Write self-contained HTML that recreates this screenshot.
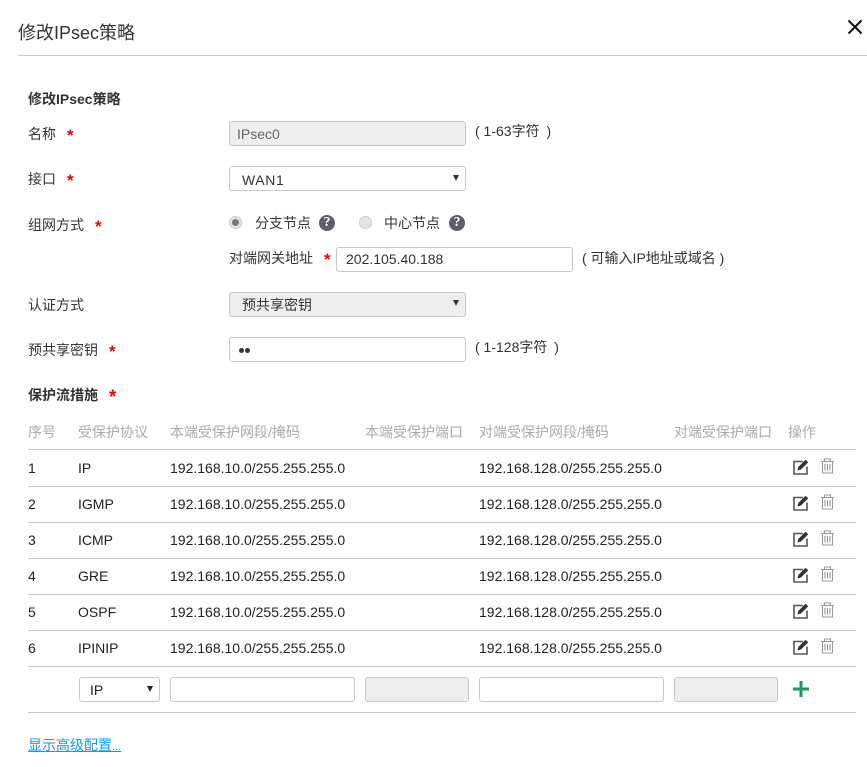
<!DOCTYPE html>
<html lang="zh">
<head>
<meta charset="utf-8">
<title>修改IPsec策略</title>
<style>
html,body{margin:0;padding:0;background:#fff}
body{width:867px;height:767px;position:relative;overflow:hidden;font-family:"Liberation Sans","WenQuanYi Zen Hei","Noto Sans CJK SC",sans-serif;font-size:14px;color:#333}
.t{position:absolute;white-space:nowrap;line-height:18px}
.l{position:absolute;height:1px;background:#c8c8c8}
.b{position:absolute;box-sizing:border-box;border:1px solid #c8c8c8;border-radius:3px;background:#fff;height:25px}
.g{background:#eee}
.s{color:#e00;font-weight:bold;font-size:17px}
.h{color:#aaa}
.n{font-size:14px;color:#222}
.a{position:absolute;width:0;height:0;border-left:3px solid transparent;border-right:3px solid transparent;border-top:6px solid #333}
.r{position:absolute;width:13px;height:13px;border-radius:50%;background:#e4e4e4;border:1px solid #ccc;box-sizing:border-box}
.q{position:absolute;width:16px;height:16px;border-radius:50%;background:#5f5f63;color:#fff;font:bold 14px/16px "Liberation Serif",serif;text-align:center}
svg{position:absolute}
</style>
</head>
<body>
<div class="t" style="left:18px;top:21px;font-size:18px;line-height:24px;color:#333">修改IPsec策略</div>
<svg style="left:847px;top:19px" width="16" height="16" viewBox="0 0 16 16"><path d="M1.500 1.500L14.500 14.500M14.500 1.500L1.500 14.500" stroke="#111" stroke-width="2" fill="none"/></svg>
<div class="l" style="left:18px;top:55px;width:849px"></div>

<div class="t" style="left:28px;top:90px;font-weight:bold">修改IPsec策略</div>

<div class="t" style="left:28px;top:125px">名称</div><div class="t s" style="left:67px;top:127px">*</div>
<div class="b g" style="left:229px;top:121px;width:237px"></div>
<div class="t" style="left:237px;top:125px;color:#666">IPsec0</div>
<div class="t" style="left:475px;top:122px">( 1-63字符 <span style="margin-left:3px">)</span></div>

<div class="t" style="left:28px;top:170px">接口</div><div class="t s" style="left:67px;top:172px">*</div>
<div class="b" style="left:229px;top:166px;width:237px"></div>
<div class="t" style="left:242px;top:171px;letter-spacing:.6px">WAN1</div>
<div class="a" style="left:453px;top:175px"></div>

<div class="t" style="left:28px;top:216px">组网方式</div><div class="t s" style="left:95px;top:218px">*</div>
<div class="r" style="left:229px;top:216px"></div><div style="position:absolute;left:232px;top:219px;width:7px;height:7px;border-radius:50%;background:#777"></div>
<div class="t" style="left:255px;top:214px">分支节点</div><div class="q" style="left:319px;top:215px">?</div>
<div class="r" style="left:359px;top:216px"></div>
<div class="t" style="left:384px;top:214px">中心节点</div><div class="q" style="left:449px;top:215px">?</div>

<div class="t" style="left:229px;top:249px">对端网关地址</div><div class="t s" style="left:324px;top:251px">*</div>
<div class="b" style="left:336px;top:247px;width:237px"></div>
<div class="t" style="left:346px;top:250px">202.105.40.188</div>
<div class="t" style="left:582px;top:249px">( 可输入IP地址或域名 )</div>

<div class="t" style="left:28px;top:296px">认证方式</div>
<div class="b g" style="left:229px;top:292px;width:237px"></div>
<div class="t" style="left:242px;top:296px">预共享密钥</div>
<div class="a" style="left:453px;top:300px"></div>

<div class="t" style="left:28px;top:341px">预共享密钥</div><div class="t s" style="left:109px;top:343px">*</div>
<div class="b" style="left:229px;top:337px;width:237px"></div>
<div style="position:absolute;left:239px;top:348px;width:5px;height:5px;border-radius:50%;background:#333"></div>
<div style="position:absolute;left:245px;top:348px;width:5px;height:5px;border-radius:50%;background:#333"></div>
<div class="t" style="left:475px;top:338px">( 1-128字符 <span style="margin-left:3px">)</span></div>

<div class="t" style="left:28px;top:386px;font-weight:bold">保护流措施</div><div class="t s" style="left:109px;top:389px;font-size:19px">*</div>

<div class="t h" style="left:28px;top:423px">序号</div>
<div class="t h" style="left:78px;top:423px">受保护协议</div>
<div class="t h" style="left:170px;top:423px">本端受保护网段/掩码</div>
<div class="t h" style="left:365px;top:423px">本端受保护端口</div>
<div class="t h" style="left:479px;top:423px">对端受保护网段/掩码</div>
<div class="t h" style="left:674px;top:423px">对端受保护端口</div>
<div class="t h" style="left:788px;top:423px">操作</div>

<div class="l" style="left:28px;top:449px;width:828px"></div>
<div class="l" style="left:28px;top:486px;width:828px"></div>
<div class="l" style="left:28px;top:522px;width:828px"></div>
<div class="l" style="left:28px;top:558px;width:828px"></div>
<div class="l" style="left:28px;top:594px;width:828px"></div>
<div class="l" style="left:28px;top:630px;width:828px"></div>
<div class="l" style="left:28px;top:666px;width:828px"></div>
<div class="l" style="left:28px;top:712px;width:828px"></div>

<div class="t n" style="left:28px;top:459px">1</div><div class="t n" style="left:78px;top:459px">IP</div><div class="t n" style="left:170px;top:459px">192.168.10.0/255.255.255.0</div><div class="t n" style="left:479px;top:459px">192.168.128.0/255.255.255.0</div>
<div class="t n" style="left:28px;top:495px">2</div><div class="t n" style="left:78px;top:495px">IGMP</div><div class="t n" style="left:170px;top:495px">192.168.10.0/255.255.255.0</div><div class="t n" style="left:479px;top:495px">192.168.128.0/255.255.255.0</div>
<div class="t n" style="left:28px;top:531px">3</div><div class="t n" style="left:78px;top:531px">ICMP</div><div class="t n" style="left:170px;top:531px">192.168.10.0/255.255.255.0</div><div class="t n" style="left:479px;top:531px">192.168.128.0/255.255.255.0</div>
<div class="t n" style="left:28px;top:567px">4</div><div class="t n" style="left:78px;top:567px">GRE</div><div class="t n" style="left:170px;top:567px">192.168.10.0/255.255.255.0</div><div class="t n" style="left:479px;top:567px">192.168.128.0/255.255.255.0</div>
<div class="t n" style="left:28px;top:603px">5</div><div class="t n" style="left:78px;top:603px">OSPF</div><div class="t n" style="left:170px;top:603px">192.168.10.0/255.255.255.0</div><div class="t n" style="left:479px;top:603px">192.168.128.0/255.255.255.0</div>
<div class="t n" style="left:28px;top:639px">6</div><div class="t n" style="left:78px;top:639px">IPINIP</div><div class="t n" style="left:170px;top:639px">192.168.10.0/255.255.255.0</div><div class="t n" style="left:479px;top:639px">192.168.128.0/255.255.255.0</div>

<svg width="0" height="0"><defs>
<g id="ic">
<path d="M10 2.500H1V15H14V7.500" fill="none" stroke="#555" stroke-width="1.600" transform="translate(0,1)"/>
<path d="M4.500 12.500L5.300 9L12.500 1.800L15.300 4.300L8 11.500Z" fill="#333"/>
<g fill="none" stroke="#999" stroke-width="1.100">
<path d="M28 3.500H41M31.500 3.500V1H37.500V3.500M29.500 3.500V15H39.500V3.500M32 6V12.500M34.500 6V12.500M37 6V12.500"/>
</g>
</g>
</defs></svg>
<svg style="left:793px;top:458px" width="44" height="17"><use href="#ic"/></svg>
<svg style="left:793px;top:494px" width="44" height="17"><use href="#ic"/></svg>
<svg style="left:793px;top:530px" width="44" height="17"><use href="#ic"/></svg>
<svg style="left:793px;top:566px" width="44" height="17"><use href="#ic"/></svg>
<svg style="left:793px;top:602px" width="44" height="17"><use href="#ic"/></svg>
<svg style="left:793px;top:638px" width="44" height="17"><use href="#ic"/></svg>

<div class="b" style="left:79px;top:677px;width:81px"></div>
<div class="t" style="left:90px;top:681px;color:#222">IP</div>
<div class="a" style="left:147px;top:686px;border-top-color:#222"></div>
<div class="b" style="left:170px;top:677px;width:185px"></div>
<div class="b g" style="left:365px;top:677px;width:104px"></div>
<div class="b" style="left:479px;top:677px;width:185px"></div>
<div class="b g" style="left:674px;top:677px;width:104px"></div>
<svg style="left:793px;top:681px" width="16" height="16"><path d="M8 0V16M0 8H16" stroke="#149a63" stroke-width="3"/></svg>

<div class="t" style="left:28px;top:736px;color:#0d9bec;text-decoration:underline">显示高级配置<span style="font-size:11px">...</span></div>
</body>
</html>
